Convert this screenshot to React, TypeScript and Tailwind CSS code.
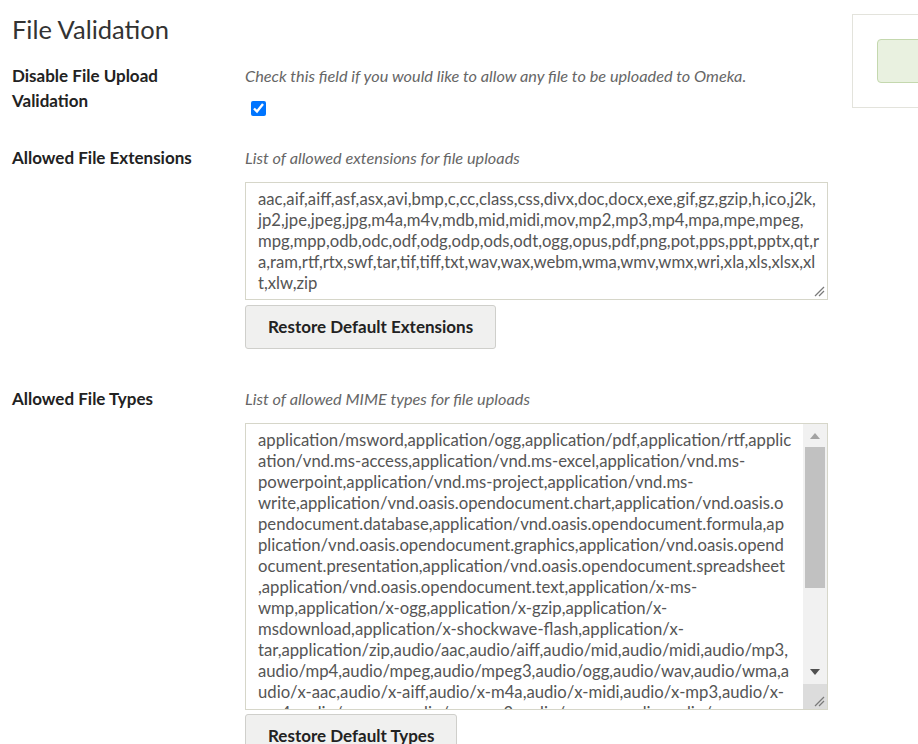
import React from 'react';

const EXTENSION_LINES = [
  'aac,aif,aiff,asf,asx,avi,bmp,c,cc,class,css,divx,doc,docx,exe,gif,gz,gzip,h,ico,j2k,',
  'jp2,jpe,jpeg,jpg,m4a,m4v,mdb,mid,midi,mov,mp2,mp3,mp4,mpa,mpe,mpeg,',
  'mpg,mpp,odb,odc,odf,odg,odp,ods,odt,ogg,opus,pdf,png,pot,pps,ppt,pptx,qt,r',
  'a,ram,rtf,rtx,swf,tar,tif,tiff,txt,wav,wax,webm,wma,wmv,wmx,wri,xla,xls,xlsx,xl',
  't,xlw,zip',
];

const MIME_LINES = [
  'application/msword,application/ogg,application/pdf,application/rtf,applic',
  'ation/vnd.ms-access,application/vnd.ms-excel,application/vnd.ms-',
  'powerpoint,application/vnd.ms-project,application/vnd.ms-',
  'write,application/vnd.oasis.opendocument.chart,application/vnd.oasis.o',
  'pendocument.database,application/vnd.oasis.opendocument.formula,ap',
  'plication/vnd.oasis.opendocument.graphics,application/vnd.oasis.opend',
  'ocument.presentation,application/vnd.oasis.opendocument.spreadsheet',
  ',application/vnd.oasis.opendocument.text,application/x-ms-',
  'wmp,application/x-ogg,application/x-gzip,application/x-',
  'msdownload,application/x-shockwave-flash,application/x-',
  'tar,application/zip,audio/aac,audio/aiff,audio/mid,audio/midi,audio/mp3,',
  'audio/mp4,audio/mpeg,audio/mpeg3,audio/ogg,audio/wav,audio/wma,a',
  'udio/x-aac,audio/x-aiff,audio/x-m4a,audio/x-midi,audio/x-mp3,audio/x-',
  'mp4,audio/x-mpeg,audio/x-mpeg3,audio/x-mpegaudio,audio/x-ms-wax,audio/x-',
];

// ─── Small drawings ───────────────────────────────────────────────────────────
const Grip: React.FC = () => (
  <svg width="11" height="11" viewBox="0 0 11 11" className="block">
    <line x1="1" y1="10" x2="10" y2="1" stroke="#7a7a7a" strokeWidth="1.2" />
    <line x1="5" y1="10" x2="10" y2="5" stroke="#7a7a7a" strokeWidth="1.2" />
  </svg>
);

const Arrow: React.FC<{ up?: boolean; color: string }> = ({ up, color }) => (
  <svg width="10" height="6" viewBox="0 0 10 6" className="block">
    <polygon points={up ? '0,6 10,6 5,0' : '0,0 10,0 5,6'} fill={color} />
  </svg>
);

// ─── Field pieces ─────────────────────────────────────────────────────────────
const Label: React.FC<{ children: React.ReactNode }> = ({ children }) => (
  <div className="text-[17px] font-bold leading-[25px] text-[#222] pr-4">{children}</div>
);

const Hint: React.FC<{ children: React.ReactNode }> = ({ children }) => (
  <p className="text-[16.3px] italic leading-[25px] text-[#666]">{children}</p>
);

const Button: React.FC<{ children: React.ReactNode; className?: string }> = ({ children, className = '' }) => (
  <button
    type="button"
    className={`h-[44px] px-[22px] bg-[#f0f0ef] border border-[#cfcfcb] rounded-[3px] text-[17px] font-bold text-[#222] ${className}`}
  >
    {children}
  </button>
);

const TextLines: React.FC<{ lines: string[] }> = ({ lines }) => (
  <div className="flex-1 min-w-0 pl-3 pt-[6px] overflow-hidden text-[16.7px] leading-[21px] text-[#555]">
    {lines.map((l, i) => (
      <div key={i} className="whitespace-nowrap">{l}</div>
    ))}
  </div>
);

// ─── App ──────────────────────────────────────────────────────────────────────
export default function App() {
  return (
    <div className="w-[918px] h-[744px] overflow-hidden bg-white font-['Lato','Open_Sans',sans-serif] flex">
      <main className="w-[828px] shrink-0 pl-3">
        <h2 className="mt-[14px] text-[25.5px] leading-[30px] text-[#333]">File Validation</h2>

        {/* Disable validation */}
        <div className="mt-[19px] grid grid-cols-[233px_583px]">
          <Label>Disable File Upload<br />Validation</Label>
          <div>
            <Hint>Check this field if you would like to allow any file to be uploaded to Omeka.</Hint>
            <input
              type="checkbox"
              defaultChecked
              className="mt-[13px] ml-[6px] w-[15px] h-[15px] block accent-[#0075ff]"
            />
          </div>
        </div>

        {/* Extensions */}
        <div className="mt-[29px] grid grid-cols-[233px_583px]">
          <Label>Allowed File Extensions</Label>
          <div>
            <Hint>List of allowed extensions for file uploads</Hint>
            <div className="mt-[12px] h-[118px] border border-[#d6d6c9] flex relative">
              <TextLines lines={EXTENSION_LINES} />
              <div className="absolute right-[2px] bottom-[2px]">
                <Grip />
              </div>
            </div>
            <Button className="mt-[5px]">Restore Default Extensions</Button>
          </div>
        </div>

        {/* MIME types */}
        <div className="mt-[37px] grid grid-cols-[233px_583px]">
          <Label>Allowed File Types</Label>
          <div>
            <Hint>List of allowed MIME types for file uploads</Hint>
            <div className="mt-[12px] h-[287px] border border-[#d6d6c9] flex">
              <TextLines lines={MIME_LINES} />
              <div className="w-[24px] shrink-0 flex flex-col bg-[#f1f1f1]">
                <div className="h-[23px] flex items-center justify-center">
                  <Arrow up color="#a3a3a3" />
                </div>
                <div className="h-[141px] mx-[2px] bg-[#c1c1c1]" />
                <div className="flex-1" />
                <div className="h-[24px] flex items-center justify-center">
                  <Arrow color="#505050" />
                </div>
                <div className="h-[25px] bg-[#dcdcdc] flex items-end justify-end pr-[2px] pb-[2px]">
                  <Grip />
                </div>
              </div>
            </div>
            <Button className="mt-[4px]">Restore Default Types</Button>
          </div>
        </div>
      </main>

      {/* Side panel */}
      <aside className="ml-6 mt-[14px] w-[160px] h-[94px] shrink-0 border border-[#e3e3dc] p-6">
        <div className="h-[44px] bg-[#e9f1e0] border border-[#c4d8ae] rounded-[4px]" />
      </aside>
    </div>
  );
}
